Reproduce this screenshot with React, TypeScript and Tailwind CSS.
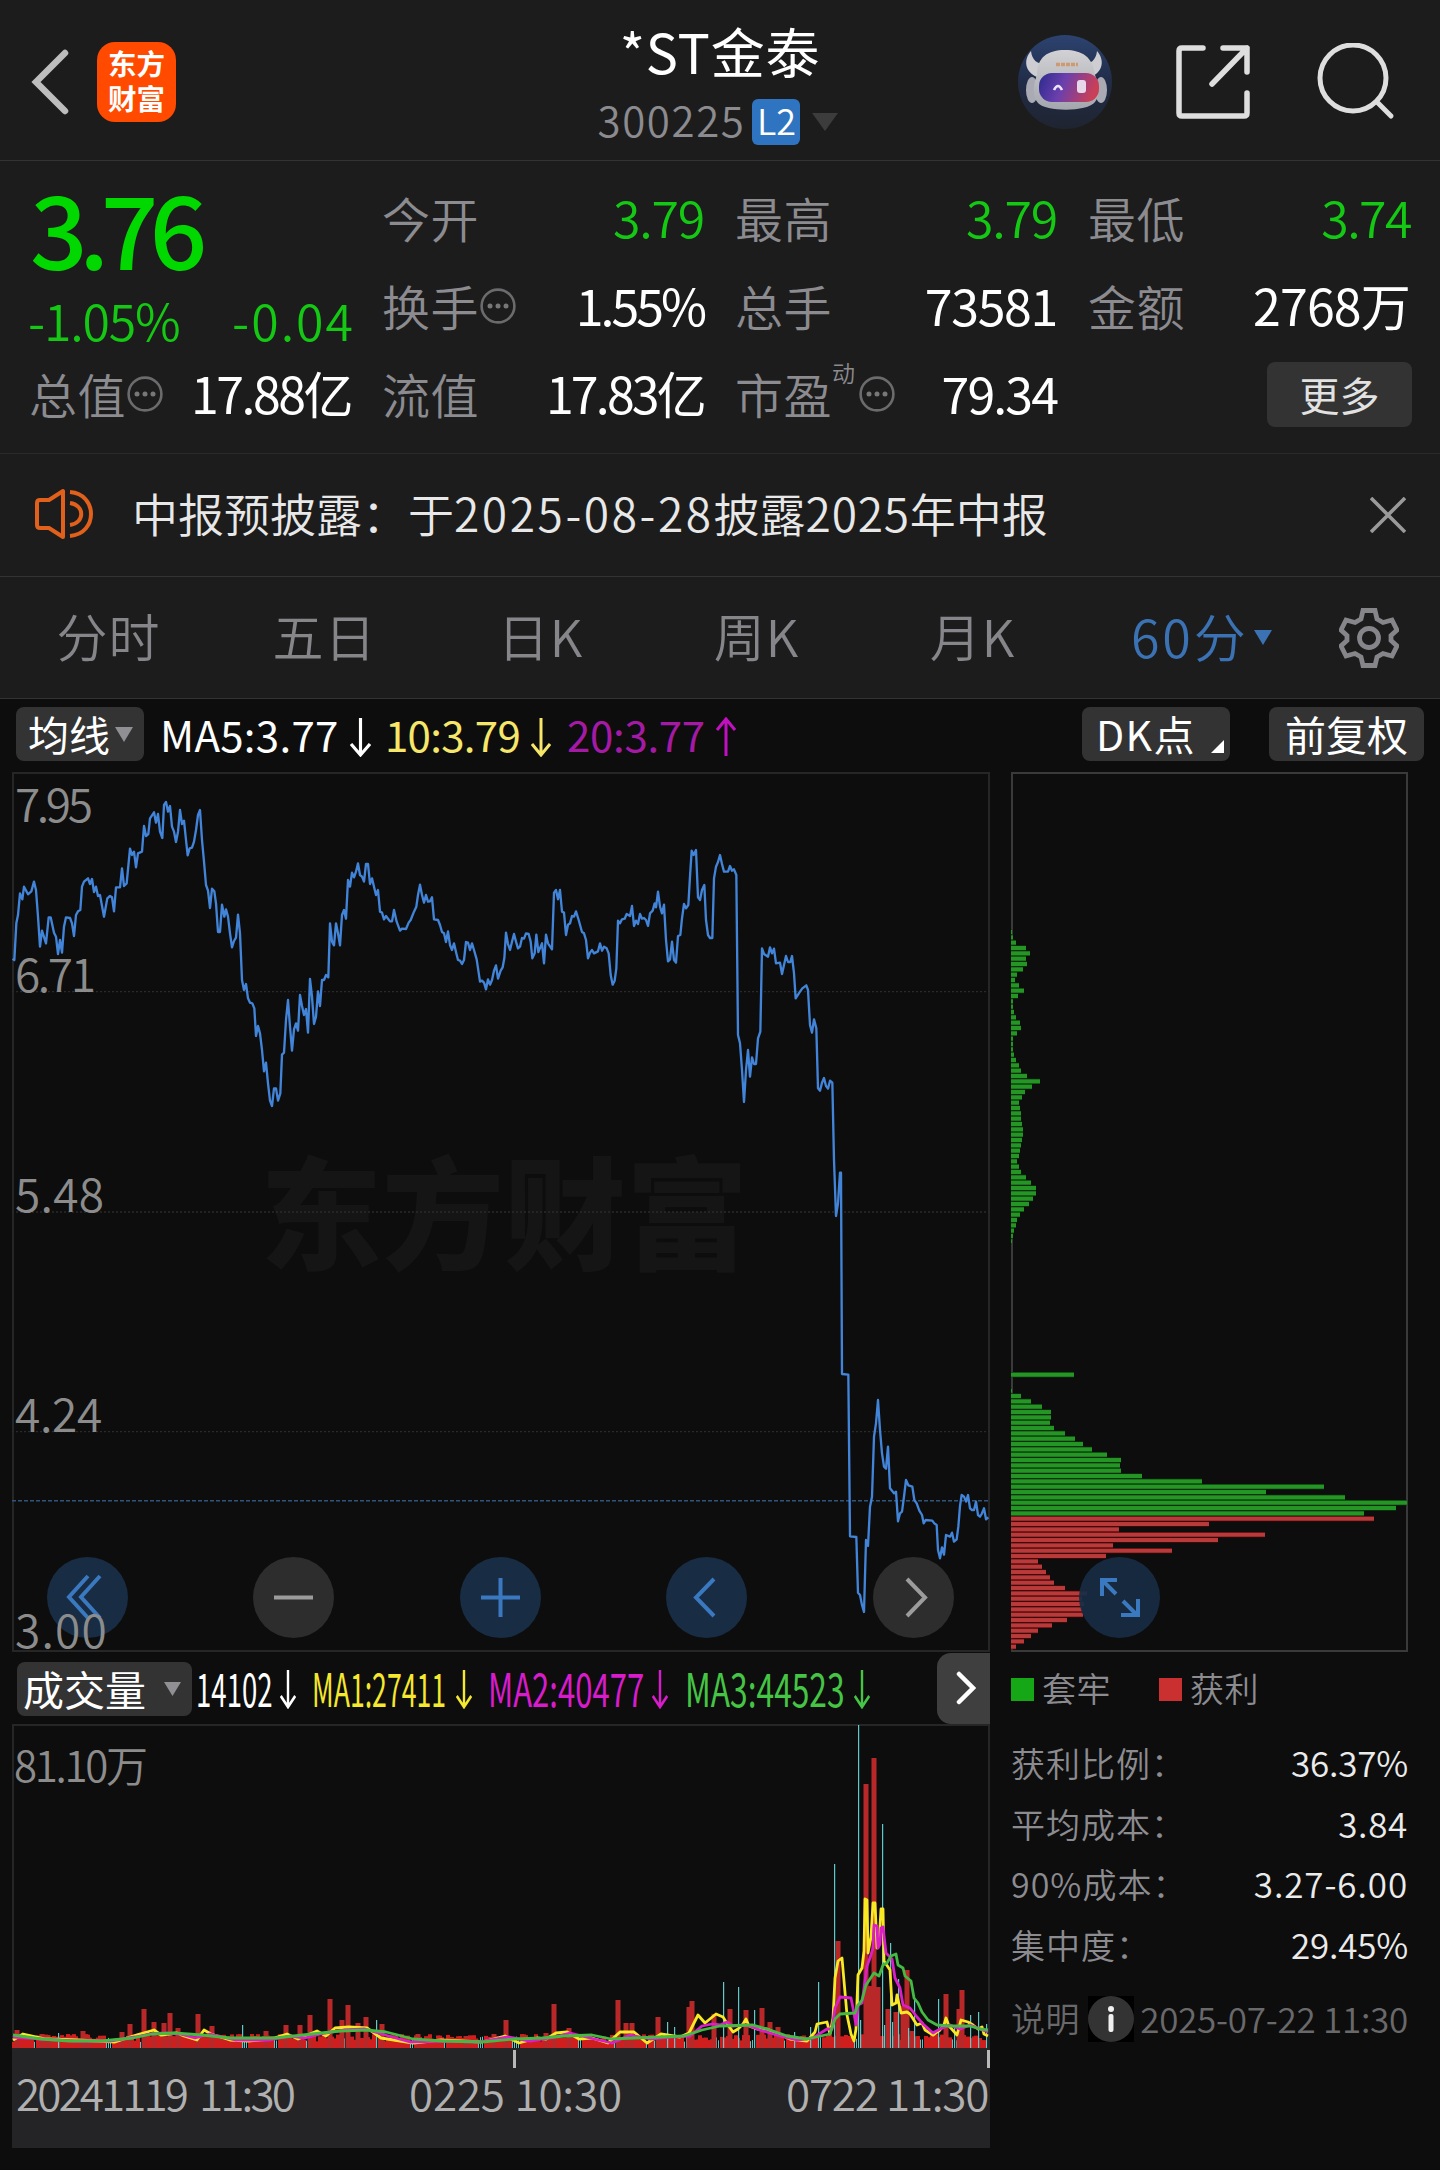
import type { ReactNode } from "react";

// Price line, three units per pixel, origin at the left edge 12px above the frame
const pricePoints =
  "38,596 43,600 49,490 54,465 60,400 67,418 72,380 84,403 94,394 102,365 108,390 114,470 120,560 126,512 138,550 146,472 152,472 162,518 168,530 174,582 180,540 186,578 192,500 198,472 210,474 216,490 222,528 228,465 234,454 241,450 246,380 252,365 264,355 270,372 276,357 282,396 288,380 294,408 300,405 312,470 322,415 330,408 336,412 342,454 348,382 360,382 366,325 372,378 380,370 390,266 396,285 402,275 408,322 414,280 426,275 432,198 438,228 445,222 450,175 462,157 468,188 474,162 480,215 487,234 492,135 498,126 504,155 510,138 516,200 522,215 528,246 534,215 540,150 546,192 552,182 558,240 563,286 569,265 576,263 582,245 588,210 594,165 600,150 606,240 612,305 618,375 624,392 630,444 636,386 643,394 648,430 654,516 660,516 666,434 673,470 678,448 684,470 690,520 696,562 702,543 708,533 714,464 720,520 726,660 732,690 738,672 744,715 750,728 757,730 763,745 768,828 774,798 780,820 786,870 792,934 798,908 804,970 810,1022 816,1038 822,985 828,985 834,1022 841,1000 846,884 852,878 858,780 864,720 870,800 876,872 882,808 888,790 894,812 900,705 906,738 912,765 918,747 924,818 930,657 936,710 942,792 948,770 954,694 960,738 966,660 972,660 978,645 985,652 990,490 996,545 1002,556 1008,490 1014,520 1020,556 1026,465 1032,450 1038,476 1044,360 1050,380 1056,338 1062,352 1068,335 1074,310 1080,345 1086,350 1092,365 1098,312 1104,312 1110,372 1116,355 1122,380 1128,405 1134,390 1140,455 1146,458 1152,478 1158,468 1170,484 1176,484 1182,450 1190,485 1200,512 1206,506 1218,507 1226,488 1232,480 1242,455 1249,440 1254,405 1260,374 1266,405 1272,428 1278,405 1284,425 1290,424 1296,412 1302,478 1314,480 1320,495 1326,516 1332,520 1338,546 1344,514 1350,555 1356,570 1362,550 1368,576 1374,600 1380,602 1386,612 1392,600 1398,546 1404,548 1410,570 1416,550 1422,570 1430,598 1440,665 1446,662 1452,668 1458,688 1464,658 1470,674 1476,660 1482,632 1488,616 1494,656 1502,632 1508,622 1513,595 1518,518 1524,552 1530,570 1536,545 1542,522 1548,545 1554,565 1560,560 1566,534 1572,536 1578,520 1586,522 1592,545 1597,595 1604,580 1609,524 1615,576 1626,550 1632,610 1638,524 1644,550 1656,568 1662,398 1668,390 1674,418 1680,390 1686,455 1692,458 1698,525 1704,494 1710,490 1716,468 1722,470 1728,454 1736,480 1746,516 1752,520 1758,540 1764,595 1770,578 1776,570 1782,580 1794,574 1800,550 1806,572 1812,560 1820,565 1826,580 1832,645 1838,674 1844,662 1849,625 1854,482 1860,490 1866,478 1874,476 1880,462 1890,468 1896,438 1902,498 1908,482 1914,492 1920,462 1926,476 1932,474 1938,480 1944,498 1950,460 1958,452 1964,430 1968,442 1974,395 1980,440 1986,460 1992,434 1998,540 2004,604 2010,598 2016,545 2022,600 2028,608 2034,528 2041,525 2046,475 2052,432 2058,445 2065,435 2070,350 2075,272 2081,285 2088,270 2094,412 2100,420 2106,390 2113,375 2118,480 2124,525 2130,534 2137,534 2142,355 2148,320 2154,306 2160,285 2166,312 2172,335 2184,335 2190,318 2196,332 2202,328 2209,345 2214,825 2220,850 2226,930 2232,1026 2238,930 2244,870 2250,950 2256,892 2262,912 2268,912 2274,835 2281,815 2286,565 2292,582 2304,590 2310,562 2316,580 2322,566 2328,610 2340,608 2346,642 2352,615 2358,588 2364,606 2371,606 2376,588 2382,640 2387,715 2400,695 2407,685 2419,676 2424,690 2430,795 2436,818 2442,778 2449,805 2454,985 2460,992 2466,968 2472,954 2478,978 2484,986 2490,962 2497,968 2502,1200 2508,1368 2514,1330 2520,1238 2523,1238 2526,1842 2545,1844 2550,2329 2569,2331 2574,2498 2580,2505 2586,2535 2592,2556 2598,2340 2604,2358 2610,2240 2616,2210 2622,2030 2628,1990 2634,1920 2640,2010 2646,2080 2652,2120 2658,2126 2664,2060 2670,2185 2682,2200 2688,2195 2694,2284 2700,2260 2706,2255 2712,2210 2718,2160 2725,2176 2737,2180 2743,2220 2750,2230 2758,2252 2766,2265 2771,2290 2777,2280 2797,2282 2803,2290 2810,2295 2814,2370 2820,2395 2826,2362 2832,2384 2838,2325 2850,2330 2856,2318 2862,2345 2870,2338 2875,2300 2880,2238 2885,2205 2892,2210 2898,2225 2904,2205 2910,2245 2916,2250 2922,2250 2928,2225 2934,2265 2940,2270 2945,2262 2952,2245 2958,2278 2965,2272";

// Chip distribution rows, one every 16/3 px
const chipUpper = [
  1, 2, 5, 15, 19, 15, 16, 12, 6, 4, 8, 13, 7, 2, 2, 3, 5, 9, 10, 6, 2, 2, 2, 3,
  5, 8, 10, 16, 29, 21, 14, 11, 8, 9, 10, 10, 11, 12, 12, 11, 10, 9, 8, 6, 8, 10,
  15, 20, 25, 25, 22, 18, 13, 9, 6, 5, 3, 2, 1,
];
const chipLower = [
  63, 0, 0, 1, 10, 20, 31, 40, 40, 39, 43, 54, 64, 72, 81, 96, 110, 109, 110,
  131, 191, 313, 255, 334, 396, 385, 353,
];
const chipProfit = [
  363, 198, 108, 254, 207, 102, 161, 95, 27, 31, 35, 39, 43, 54, 76, 71, 73, 71,
  72, 56, 41, 27, 20, 13, 5,
];

// [x, top] of the taller volume bars
const redSpikes = [
  [17, 2030], [42, 2034], [48, 2035], [83, 2031], [88, 2037], [122, 2032],
  [130, 2024], [144, 2009], [154, 2022], [164, 2023], [170, 2013], [178, 2028],
  [198, 2014], [212, 2026], [266, 2031], [286, 2025], [300, 2025], [310, 2015],
  [330, 1999], [342, 2020], [348, 2005], [358, 2023], [366, 2017], [382, 2024],
  [418, 2034], [466, 2036], [494, 2034], [506, 2020], [546, 2033], [554, 2004],
  [569, 2028], [618, 2000], [626, 2023], [632, 2023], [658, 2017], [689, 2007],
  [692, 2001], [714, 2014], [730, 2009], [746, 2010], [762, 2008], [770, 2022],
  [778, 2027], [838, 1941], [866, 1784], [870, 1986], [874, 1758], [878, 1987],
  [888, 2009], [896, 2012], [903, 2006], [907, 1970], [912, 2031], [946, 1994],
  [959, 2009], [962, 1990],
];
const cyanSpikes = [
  [58, 2033], [242, 2025], [376, 2020], [667, 2022], [674, 2027], [723, 1982],
  [738, 1987], [754, 2010], [794, 2032], [810, 2027], [818, 1982], [834, 1864],
  [858, 1725], [860, 2020], [882, 1824], [884, 2025], [890, 1943], [892, 2022],
  [898, 1979], [908, 2028], [914, 1998], [938, 1999], [954, 2025], [970, 2015],
  [978, 2012], [986, 2024],
];

const ma1Points =
  "13,2040 23,2034 46,2039 78,2040 115,2042 133,2036 147,2032 154,2030 161,2035 177,2033 184,2036 197,2040 204,2030 211,2034 230,2040 248,2041 271,2039 287,2034 298,2039 317,2031 326,2036 335,2028 349,2027 367,2028 381,2038 413,2043 441,2040 482,2042 505,2036 519,2043 537,2038 546,2039 556,2033 567,2032 579,2039 592,2038 608,2043 620,2032 634,2032 647,2043 661,2034 680,2037 689,2033 698,2015 705,2023 716,2014 723,2017 728,2025 733,2032 738,2029 743,2024 746,2019 749,2026 757,2029 767,2029 778,2034 790,2039 807,2041 815,2032 817,2024 827,2022 830,2034 833,2018 835,1978 838,1961 842,1958 844,1981 847,2015 851,2034 854,2041 856,2029 858,1975 862,1968 864,1951 865,1899 867,1900 868,1953 871,1937 873,1903 875,1903 877,1948 879,1944 881,1909 883,1909 884,1961 890,1970 892,2005 896,2003 897,1995 901,2013 907,2012 910,2014 917,2025 922,2023 925,2030 933,2035 940,2030 944,2025 946,2018 949,2026 957,2035 961,2020 968,2022 973,2025 978,2029 982,2027 984,2034 988,2036";
const ma2Points =
  "13,2037 40,2039 75,2041 110,2041 135,2037 150,2034 165,2033 180,2034 195,2038 210,2034 235,2040 270,2040 290,2036 305,2038 325,2033 345,2030 365,2029 385,2035 410,2042 440,2041 480,2042 508,2037 530,2041 555,2037 570,2033 590,2038 612,2043 630,2035 650,2039 670,2037 690,2036 702,2026 712,2024 720,2025 727,2022 733,2026 747,2025 760,2030 780,2036 797,2040 813,2038 827,2029 832,2029 835,2008 840,1997 851,1998 853,2008 856,2025 858,2005 862,2003 865,1981 867,1966 870,1958 873,1948 874,1925 877,1926 878,1948 880,1944 881,1928 883,1927 886,1953 892,1959 895,1978 900,1988 903,2005 910,2008 917,2017 923,2024 933,2033 940,2029 950,2025 960,2029 970,2025 980,2029 988,2032";
const ma3Points =
  "13,2035 41,2039 69,2041 101,2041 133,2038 152,2034 174,2033 202,2035 230,2038 275,2038 312,2034 340,2031 367,2030 386,2032 413,2039 441,2041 482,2042 514,2039 542,2038 565,2036 592,2035 611,2039 634,2038 661,2037 684,2036 702,2030 720,2026 753,2025 770,2030 787,2036 807,2039 830,2034 835,2019 840,2014 855,2013 857,2007 862,2000 866,1985 870,1979 874,1973 879,1976 883,1965 887,1963 891,1956 896,1954 898,1965 903,1968 905,1976 911,1981 914,1998 918,2003 922,2012 928,2020 937,2025 950,2026 970,2026 980,2029 988,2030";

const axisBars = Array.from({ length: 486 }, (_, i) => {
  const noise = Math.abs(Math.sin(i * 12.9898) * 43758.5453) % 1;
  return { x: 14 + i * 2, h: 6 + noise * 8, up: Math.sin(i * 0.37) + noise > -0.25 };
});

function Arrow({ up = false, className = "" }: { up?: boolean; className?: string }) {
  return (
    <svg
      viewBox="0 0 20 40"
      preserveAspectRatio="none"
      className={`shrink-0 ${up ? "rotate-180" : ""} ${className}`}
      fill="none"
      stroke="currentColor"
      strokeWidth="3"
    >
      <path d="M10 1V38M1 27L10 38L19 27" />
    </svg>
  );
}

function Triangle({ className = "" }: { className?: string }) {
  return (
    <svg viewBox="0 0 18 15" preserveAspectRatio="none" className={`shrink-0 ${className}`} fill="currentColor">
      <path d="M0 0H18L9 15Z" />
    </svg>
  );
}

function More() {
  return (
    <svg viewBox="0 0 36 36" className="mt-[1px] ml-px size-9 shrink-0" fill="none" stroke="#6b6b6e" strokeWidth="2.6">
      <circle cx="18" cy="18" r="16.4" />
      <g fill="#77777a" stroke="none">
        <circle cx="10" cy="18" r="2.5" />
        <circle cx="18" cy="18" r="2.5" />
        <circle cx="26" cy="18" r="2.5" />
      </g>
    </svg>
  );
}

function Robot() {
  return (
    <svg viewBox="0 0 94 94" className="size-[94px]">
      <defs>
        <linearGradient id="sky" x1="0" y1="0" x2="0" y2="1">
          <stop offset="0" stopColor="#2c4370" />
          <stop offset="0.5" stopColor="#212c47" />
          <stop offset="1" stopColor="#1f2430" />
        </linearGradient>
        <linearGradient id="visor" x1="0" y1="0" x2="1" y2="0.2">
          <stop offset="0" stopColor="#2b2a8c" />
          <stop offset="0.45" stopColor="#6a3fae" />
          <stop offset="1" stopColor="#c93f58" />
        </linearGradient>
        <linearGradient id="shell" x1="0" y1="0" x2="0" y2="1">
          <stop offset="0" stopColor="#d2d2d4" />
          <stop offset="1" stopColor="#a4a6ae" />
        </linearGradient>
      </defs>
      <circle cx="47" cy="47" r="47" fill="url(#sky)" />
      <path d="M13 16C5 25 7 37 19 42L27 29C19 29 14 25 13 16ZM79 16C87 25 85 37 73 42L65 29C73 29 78 25 79 16Z" fill="#cdcdd2" />
      <ellipse cx="14" cy="55" rx="6" ry="13" fill="#a9aab4" />
      <ellipse cx="83" cy="55" rx="6" ry="13" fill="#a9aab4" />
      <path d="M19 40C19 22 30 15 47 15C64 15 75 22 77 40C81 50 82 61 77 67C70 77 28 77 20 68C14 61 15 50 19 40Z" fill="url(#shell)" />
      <rect x="21" y="38" width="60" height="29" rx="13" fill="url(#visor)" />
      <path d="M36 55Q40 47 44 55" stroke="#e8e6ff" strokeWidth="2.600" fill="none" />
      <rect x="59" y="45" width="9" height="13" rx="3" fill="#e6d8ea" />
      <path d="M38 29.500H60" stroke="#d09a70" strokeWidth="3.500" strokeDasharray="4 1" />
    </svg>
  );
}

function Header() {
  return (
    <header className="grid h-[161px] grid-cols-[460px_1fr_460px] border-b border-[#333]">
      <div className="flex items-start">
        <svg viewBox="0 0 38 66" className="mt-[49px] ml-[31px] h-[66px] w-[38px]" fill="none" stroke="#bdbdbd" strokeWidth="6.5" strokeLinecap="round">
          <path d="M34 4L5 33L34 62" />
        </svg>
        <div className="mt-[42px] ml-7 h-20 w-[79px] rounded-[18px] bg-[#ff4a00] pt-[3px] text-center text-[28.5px] leading-[35px] font-bold text-white">
          东方
          <br />
          财富
        </div>
      </div>
      <div className="pt-[24px] text-center font-normal">
        <h1 className="text-[54px] leading-[54px] tracking-[0.8px] whitespace-nowrap text-white">*ST金泰</h1>
        <div className="mt-[21px] flex items-start justify-center pr-1">
          <span className="text-[42px] leading-10 font-[350] tracking-[1.6px] text-[#8b8b90]">300225</span>
          <span className="ml-[7px] h-[46px] w-12 rounded-md bg-[#2f74c0] text-[36px] leading-[41px] font-[350] text-white">L2</span>
          <Triangle className="mt-[14px] ml-3 h-[18px] w-[26px] text-[#3c3c3c]" />
        </div>
      </div>
      <div className="flex items-start justify-end pr-[45px]">
        <div className="mt-[35px]">
          <Robot />
        </div>
        <svg viewBox="0 0 74 74" className="mt-[45px] ml-16 size-[74px]" fill="none" stroke="#dedede" strokeWidth="5.500" strokeLinecap="round" strokeLinejoin="round">
          <path d="M27 3H6Q3 3 3 6V68Q3 71 6 71H68Q71 71 71 68V48M47 3H71V27M71 3L36 39" />
        </svg>
        <svg viewBox="0 0 78 78" className="mt-[43px] ml-[67px] size-[78px]" fill="none" stroke="#dedede" strokeWidth="5" strokeLinecap="round">
          <circle cx="36" cy="35" r="33" />
          <path d="M60 59L74 73" />
        </svg>
      </div>
    </header>
  );
}

type StatProps = {
  label: string;
  value: string;
  valueClass?: string;
  more?: boolean;
  sup?: string;
};

function Stat({ label, value, valueClass = "text-white", more = false, sup }: StatProps) {
  return (
    <div className="flex h-[88px] items-center justify-between whitespace-nowrap">
      <span className="-ml-px flex items-center pt-0.5 text-[48px] tracking-[0.5px] text-[#8b8b90]">
        {label}
        {sup && <sup className="-mt-5 mr-0.5 text-[23px] leading-6">{sup}</sup>}
        {more && <More />}
      </span>
      <span className={`text-[50px] ${valueClass}`}>{value}</span>
    </div>
  );
}

function Quote() {
  return (
    <section className="grid h-[293px] grid-cols-4 content-start gap-x-8 border-b border-[#2a2a2a] px-[30px] pt-[11px]">
      <div className="row-span-2 h-[176px] text-[#14c814]">
        <div className="pt-[3px] text-[101px] leading-[103px] font-medium tracking-[-8.5px] text-[#00d800]">3.76</div>
        <div className="mt-[16px] flex justify-between text-[50px] leading-[50px]">
          <span className="-ml-0.5 tracking-[-1.2px]">-1.05%</span>
          <span className="-mr-1 tracking-[2px]">-0.04</span>
        </div>
      </div>
      <Stat label="今开" value="3.79" valueClass="text-[#14c814] tracking-[-1.2px]" />
      <Stat label="最高" value="3.79" valueClass="text-[#14c814] tracking-[-1.2px]" />
      <Stat label="最低" value="3.74" valueClass="text-[#14c814] tracking-[-1.5px] -mr-px" />
      <Stat label="换手" value="1.55%" valueClass="font-normal text-white tracking-[-3px]" more />
      <Stat label="总手" value="73581" valueClass="font-normal text-white tracking-[-1.3px]" />
      <Stat label="金额" value="2768万" valueClass="font-normal text-white tracking-[-0.8px]" />
      <Stat label="总值" value="17.88亿" valueClass="font-normal text-white tracking-[-2.5px]" more />
      <Stat label="流值" value="17.83亿" valueClass="font-normal text-white tracking-[-2.8px]" />
      <Stat label="市盈" value="79.34" valueClass="font-normal text-white tracking-[-1.9px]" sup="动" more />
      <button className="mt-[14px] -mr-[2px] h-[65px] w-[145px] justify-self-end rounded-lg bg-[#333] text-[40px] leading-[59px] font-normal text-[#e2e2e2]">
        更多
      </button>
    </section>
  );
}

function Notice() {
  return (
    <section className="flex h-[123px] items-center border-b border-[#333] pr-[34px] pl-[34px]">
      <svg viewBox="0 0 60 52" className="-mt-[2px] h-[52px] w-[60px]" fill="none" stroke="#e0601c" strokeWidth="4">
        <path d="M29 3V49L15 40H6Q3 40 3 37V15Q3 12 6 12H15Z" strokeLinejoin="round" />
        <path d="M36 4C64 6 64 46 36 48M36 15C51 17 51 35 36 37" />
      </svg>
      <p className="-mt-[6px] ml-[38px] text-[46px] whitespace-nowrap text-[#e8e8e8]">
        中报预披露：于<span className="tracking-[2.6px]">2025-08-28</span>披露<span className="tracking-[0.8px]">2025</span>年中报
      </p>
      <svg viewBox="0 0 36 36" className="ml-auto size-9" stroke="#9a9a9a" strokeWidth="3.6">
        <path d="M1 1L35 35M35 1L1 35" />
      </svg>
    </section>
  );
}

function Tabs() {
  return (
    <nav className="flex h-[122px] items-center border-b border-[#333] text-[51px] tracking-[1px] text-[#85858a]">
      {["分时", "五日", "日K", "周K", "月K"].map((tab) => (
        <span key={tab} className="-mt-1 w-[216px] pl-px text-center">
          {tab}
        </span>
      ))}
      <span className="ml-[51px] flex w-[141px] items-center text-[#3a72b4]">
        <span className="-mt-1 w-[123px] text-[52px] tracking-[2.8px] whitespace-nowrap">60分</span>
        <Triangle className="h-[15px] w-[18px]" />
      </span>
      <svg viewBox="0 0 60 60" className="ml-[67px] size-[60px]" fill="none" stroke="#85858a" strokeWidth="4.8">
        <path d="M24 2.5H36L38 11L44 14.500L53 12L58 22L52 27.500V32.500L58 38L53 48L44 45.500L38 49L36 57.500H24L22 49L16 45.500L7 48L2 38L8 32.500V27.500L2 22L7 12L16 14.500L22 11Z" />
        <circle cx="30" cy="30" r="9.500" />
      </svg>
    </nav>
  );
}

function Chip({ className = "", children }: { className?: string; children: ReactNode }) {
  return (
    <div className={`flex h-[54px] shrink-0 items-center rounded-lg bg-[#333] text-[41px] leading-[48px] whitespace-nowrap text-white ${className}`}>
      {children}
    </div>
  );
}

function MaToolbar() {
  return (
    <div className="flex h-[73px] items-start pt-2 pl-4 text-[42px] leading-[50px] font-normal whitespace-nowrap">
      <Chip className="w-32 justify-between pr-[11px] pl-3">
        <span className="-mt-[3px]">均线</span>
        <Triangle className="h-[15px] w-[18px] text-[#8f8f94]" />
      </Chip>
      <span className="mt-0.5 ml-4 w-[190px] tracking-[0.3px] text-white">MA5:3.77</span>
      <Arrow className="mt-[10px] h-10 w-[21px] text-white" />
      <span className="mt-0.5 ml-[14px] w-[146px] tracking-[-0.7px] text-[#f6e66a]">10:3.79</span>
      <Arrow className="mt-[10px] h-10 w-5 text-[#f6e66a]" />
      <span className="mt-0.5 ml-4 w-[149px] tracking-[-0.3px] text-[#a51aa5]">20:3.77</span>
      <Arrow up className="mt-[10px] h-10 w-5 text-[#c010c0]" />
      <Chip className="mr-[39px] ml-auto w-[148px] pl-[14px]">
        <span className="-mt-[3px] tracking-[1.4px]">DK点</span>
        <svg viewBox="0 0 13 13" className="mt-[24px] mr-[6px] ml-auto size-[13px]" fill="#fff">
          <path d="M13 0V13H0Z" />
        </svg>
      </Chip>
      <Chip className="mr-4 w-[155px] justify-center">
        <span className="-mt-[3px]">前复权</span>
      </Chip>
    </div>
  );
}

const controls = [
  { left: "left-[33px]", blue: true, d: "M41 19L22 40L41 61M53 19L34 40L53 61" },
  { left: "left-[239px]", blue: false, d: "M21 40.500H60" },
  { left: "left-[446px]", blue: true, d: "M21 40.500H60M40.500 21V60" },
  { left: "left-[652px]", blue: true, d: "M48 22L30 40.500L48 59" },
  { left: "left-[859px]", blue: false, d: "M34 22L52 40.500L34 59" },
];

function PriceChart() {
  return (
    <div className="relative h-[880px] w-[978px] border-2 border-[#262626] text-[46px] leading-[46px] text-[#8c8c8c]">
      <div className="absolute top-[358px] left-[246px] text-[122px] leading-[150px] font-black text-[#151515]">东方财富</div>
      <svg viewBox="36 36 2934 2640" className="absolute -top-0.5 -left-0.5 h-[880px] w-[978px]" fill="none">
        <g stroke="#2a2a2a" strokeWidth="4" strokeDasharray="6 6">
          <path d="M36 695H2970M36 1356H2970M36 2015H2970" />
        </g>
        <path d="M36 2222H2970" stroke="#31547d" strokeWidth="4.500" strokeDasharray="12 6" />
        <polyline points={pricePoints} stroke="#4284d8" strokeWidth="7" strokeLinejoin="round" />
      </svg>
      {controls.map((c) => (
        <svg
          key={c.left}
          viewBox="0 0 81 81"
          className={`absolute top-[783px] size-[81px] ${c.left}`}
          fill="none"
          stroke={c.blue ? "#3a78c0" : "#9c9c9c"}
          strokeWidth="4"
        >
          <circle cx="40.500" cy="40.500" r="40.500" fill={c.blue ? "#182c44" : "#2d2d2d"} stroke="none" />
          <path d={c.d} />
        </svg>
      ))}
      <span className="absolute top-[5px] left-px tracking-[-3.4px]">7.95</span>
      <span className="absolute top-[175px] left-px tracking-[-2.4px]">6.71</span>
      <span className="absolute top-[395px] left-px tracking-[0.3px]">5.48</span>
      <span className="absolute top-[615px] left-px tracking-[-0.3px]">4.24</span>
      <span className="absolute top-[831px] left-px tracking-[1.2px]">3.00</span>
    </div>
  );
}

function ChipRows({ rows, top, color, gap }: { rows: number[]; top: number; color: string; gap: string }) {
  return (
    <g>
      {rows.map((w, i) => w > 0 && <rect key={`g${i}`} x="0" y={top + (i * 16) / 3 - 2.67} width={w} height="5.34" fill={gap} />)}
      {rows.map((w, i) => w > 0 && <rect key={i} x="0" y={top + (i * 16) / 3 - 2} width={w} height="4" fill={color} />)}
    </g>
  );
}

function ChipChart() {
  return (
    <div className="relative h-[880px] w-[397px] border-2 border-[#3a3a3a]">
      <svg viewBox="0 0 396 880" className="absolute -top-0.5 -left-0.5 h-[880px] w-[396px] overflow-visible">
        <ChipRows rows={chipUpper} top={160} color="#259625" gap="#0a3a0a" />
        <ChipRows rows={chipLower} top={602.7} color="#259625" gap="#0a3a0a" />
        <ChipRows rows={chipProfit} top={746.7} color="#b93a3a" gap="#4a0808" />
      </svg>
      <svg viewBox="0 0 81 81" className="absolute top-[783px] left-[66px] size-[81px]" fill="none" stroke="#3a78c0" strokeWidth="4">
        <circle cx="40.500" cy="40.500" r="40.500" fill="#182c44" fillOpacity="0.93" stroke="none" />
        <path d="M38 23H23V39M23 23L37 37M44 44L58 58M59 42V58H42" />
      </svg>
    </div>
  );
}

function VolumeToolbar() {
  return (
    <div className="flex h-[72px] items-start pl-[5px] text-[46px] leading-[60px] font-normal whitespace-nowrap">
      <Chip className="mt-[10px] w-[175px] justify-between pr-[11px] pl-[6px]">
        <span className="-mt-[3px]">成交量</span>
        <Triangle className="h-[14px] w-[17px] text-[#8f8f94]" />
      </Chip>
      <span className="mt-[5px] ml-1 w-[84px] text-white">
        <span className="inline-block origin-left scale-x-[0.6]">14102</span>
      </span>
      <Arrow className="mt-[17px] h-10 w-4 text-white" />
      <span className="mt-[5px] ml-4 w-[144px] text-[#f5e82e]">
        <span className="inline-block origin-left scale-x-[0.58]">MA1:27411</span>
      </span>
      <Arrow className="mt-[17px] h-10 w-4 text-[#f5e82e]" />
      <span className="mt-[5px] ml-4 w-[164px] text-[#d81ccc]">
        <span className="inline-block origin-left scale-x-[0.675]">MA2:40477</span>
      </span>
      <Arrow className="mt-[17px] h-10 w-4 text-[#d81ccc]" />
      <span className="mt-[5px] ml-[17px] w-[169px] text-[#45c445]">
        <span className="inline-block origin-left scale-x-[0.69]">MA3:44523</span>
      </span>
      <Arrow className="mt-[17px] h-10 w-4 text-[#45c445]" />
      <div className="mt-px ml-auto flex h-[71px] w-[53px] items-center justify-center rounded-l-[14px] bg-[#3f3f3f]">
        <svg viewBox="0 0 20 34" className="mt-[-2px] ml-1 h-[34px] w-5" fill="none" stroke="#fff" strokeWidth="4.500" strokeLinecap="round">
          <path d="M3 3L17 17L3 31" />
        </svg>
      </div>
    </div>
  );
}

function VolumeChart() {
  return (
    <div className="relative h-[326px] w-[978px] border-2 border-[#262626] text-[42px] leading-[44px] text-[#8c8c8c]">
      <span className="absolute top-[16px] left-0 tracking-[-2.3px]">81.10万</span>
      <svg viewBox="12 1724 978 326" className="absolute -top-0.5 -left-0.5 h-[326px] w-[978px]" fill="none">
        {axisBars.map((b) => (
          <rect key={b.x} x={b.up ? b.x - 2 : b.x} y={2048 - b.h} width={b.up ? 4 : 1} height={b.h} fill={b.up ? "#cf1e1e" : "#5fc4c4"} />
        ))}
        {redSpikes.map(([x, y]) => (
          <rect key={x} x={x - 2.5} y={y} width="5" height={2048 - y} fill="#b92828" />
        ))}
        {cyanSpikes.map(([x, y]) => (
          <rect key={x} x={x} y={y} width="1.200" height={2048 - y} fill="#62c8c8" />
        ))}
        <g strokeWidth="2.800" strokeLinejoin="round">
          <polyline points={ma1Points} stroke="#f9e925" />
          <polyline points={ma2Points} stroke="#d91fc6" />
          <polyline points={ma3Points} stroke="#44b944" />
        </g>
      </svg>
    </div>
  );
}

function TimeAxis() {
  return (
    <div className="relative flex h-[98px] w-[978px] bg-[#242426] pt-[13px] pr-0.5 pl-1 text-[44px] leading-[58px] whitespace-nowrap text-[#b0b0b0]">
      <i className="absolute top-0 left-[501px] h-[18px] w-[3px] bg-[#b8b8b8]" />
      <i className="absolute top-0 right-0 h-[18px] w-[3px] bg-[#b8b8b8]" />
      <span className="w-[393px] tracking-[-2.9px] [word-spacing:6px]">20241119 11:30</span>
      <span className="tracking-[-0.2px]">0225 10:30</span>
      <span className="ml-auto tracking-[-1.3px]">0722 11:30</span>
    </div>
  );
}

const costs = [
  { label: "获利比例：", value: "36.37%", spacing: "tracking-[-0.2px]" },
  { label: "平均成本：", value: "3.84", spacing: "tracking-[0.7px]" },
  { label: "90%成本：", value: "3.27-6.00", spacing: "tracking-[0.9px]" },
  { label: "集中度：", value: "29.45%", spacing: "tracking-[-0.2px]" },
];

function CostPanel() {
  return (
    <div className="w-[397px] text-[34px] text-[#8b8b90]">
      <div className="flex h-[72px] items-center pt-0.5">
        <i className="size-[23px] bg-[#16a716]" />
        <span className="-mt-[3px] ml-2 w-[117px] tracking-[0.5px]">套牢</span>
        <i className="size-[23px] bg-[#cb3030]" />
        <span className="-mt-[3px] ml-2 tracking-[0.5px]">获利</span>
      </div>
      <div className="pt-2">
        {costs.map(({ label, value, spacing }) => (
          <div key={label} className="flex h-[60.7px] items-center justify-between whitespace-nowrap">
            <span className="tracking-[1px]">{label}</span>
            <span className={`text-[35px] text-[#ebebeb] ${spacing}`}>{value}</span>
          </div>
        ))}
      </div>
      <div className="mt-[19px] flex h-[50px] items-center whitespace-nowrap text-[#69696b]">
        <span className="-mt-0.5 w-[77px] tracking-[0.5px]">说明</span>
        <svg viewBox="0 0 46 46" className="size-[46px]">
          <path d="M0 0H46V46H0Z" fill="#000" />
          <circle cx="23" cy="23" r="23" fill="#333" />
          <circle cx="23" cy="13" r="3" fill="#f0f0f0" />
          <rect x="20.500" y="18" width="5" height="18" rx="2" fill="#f0f0f0" />
        </svg>
        <span className="-mt-0.5 ml-auto text-[35px] tracking-[-0.25px]">2025-07-22 11:30</span>
      </div>
    </div>
  );
}

export default function App() {
  return (
    <main className="h-[2170px] w-[1440px] overflow-hidden bg-[#0d0d0d] font-['Noto_Sans_CJK_SC',sans-serif] font-[350]">
      <div className="bg-[#1c1c1c]">
        <Header />
        <Quote />
        <Notice />
        <Tabs />
      </div>
      <MaToolbar />
      <div className="flex gap-[21px] pl-3">
        <div>
          <PriceChart />
          <VolumeToolbar />
          <VolumeChart />
          <TimeAxis />
        </div>
        <div>
          <ChipChart />
          <CostPanel />
        </div>
      </div>
    </main>
  );
}
